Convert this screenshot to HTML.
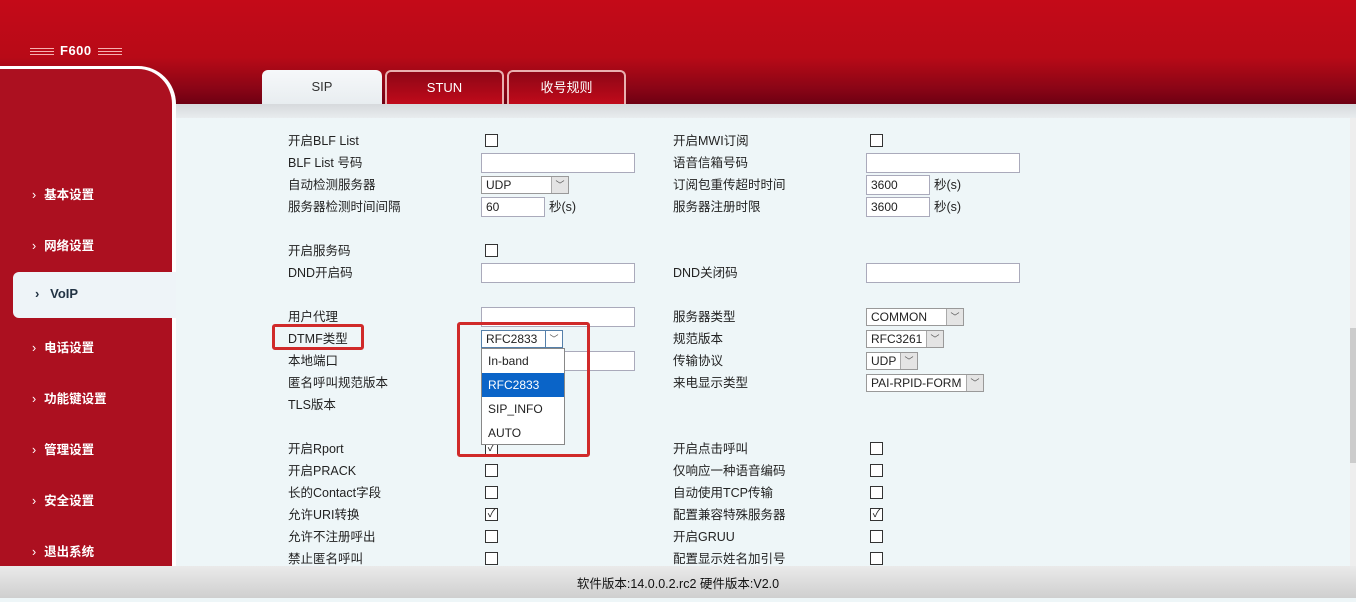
<!DOCTYPE html>
<html><head><meta charset="utf-8"><style>
*{margin:0;padding:0;box-sizing:border-box}
body{width:1356px;height:598px;overflow:hidden;position:relative;font-family:"Liberation Sans","Noto Sans CJK SC",sans-serif;font-size:12.5px;color:#222;background:#eef6f8}
#hdr{position:absolute;left:0;top:0;width:1356px;height:104px;background:linear-gradient(180deg,#c40a18 0%,#b80a17 55%,#8a0516 85%,#6e0012 100%)}
#logo{position:absolute;left:24px;top:43px;color:#fff;font-weight:bold;font-size:13px;letter-spacing:.5px}
#logo i{display:inline-block;width:24px;height:7px;border-top:1px solid #f5b0b0;border-bottom:1px solid #f5b0b0;vertical-align:middle;margin:0 6px;position:relative}
#logo i:after{content:"";position:absolute;left:0;right:0;top:2px;height:1px;background:#f5b0b0}
#side{position:absolute;left:0;top:66px;width:176px;height:500px;background:#ac1020;border-top:3px solid #fff;border-right:4px solid #fff;border-top-right-radius:38px}
.nav{position:absolute;left:32px;color:#fff;font-weight:bold;font-size:12.5px}
.nav:before{content:"›";margin-right:8px;font-weight:normal}
#act{position:absolute;left:13px;top:272px;width:163px;height:46px;background:#eef4f8;border-radius:6px 0 0 6px}
#act span{position:absolute;left:22px;top:14px;font-weight:bold;color:#234;font-size:13px}
.tab{position:absolute;top:70px;height:34px;border-radius:6px 6px 0 0;text-align:center;line-height:34px;font-size:13px}
#band{position:absolute;left:176px;top:104px;width:1180px;height:14px;background:linear-gradient(#d6d9dc,#e8ecee)}
#scroll{position:absolute;left:1350px;top:118px;width:6px;height:448px;background:#eee}
#foot{position:absolute;left:0;top:566px;width:1356px;height:32px;background:linear-gradient(#eaeaea,#cfcfcf);text-align:center;line-height:36px;font-size:12.5px;color:#111}
.l{position:absolute;white-space:nowrap;margin-top:-4px}
.in{position:absolute;height:20px;border:1px solid #aab;background:#fff;font-size:12px;padding-left:4px;line-height:18px}
.cb{position:absolute;width:13px;height:13px;border:1px solid #333;background:#fff;font-size:11px;line-height:11px;text-align:center}
.sel{position:absolute;height:18px;border:1px solid #999;background:#fff;font-size:12px;padding-left:4px;line-height:16px}
.sel b{position:absolute;right:0;top:0;width:17px;height:16px;border-left:1px solid #aaa;background:#e4e4e4;font-weight:normal;font-size:9px;text-align:center;color:#555}
</style></head><body>
<div id="hdr"></div>
<div id="logo"><i></i>F600<i></i></div>
<div class="tab" style="left:262px;width:120px;background:linear-gradient(#f6f8fa,#e8edf0);color:#333">SIP</div>
<div class="tab" style="left:385px;width:119px;background:linear-gradient(#8d0616,#c00a1a);border:2px solid #e9b0b0;border-bottom:none;color:#fff;line-height:32px">STUN</div>
<div class="tab" style="left:507px;width:119px;background:linear-gradient(#8d0616,#c00a1a);border:2px solid #e9b0b0;border-bottom:none;color:#fff;line-height:32px">收号规则</div>
<div id="band"></div>
<div id="side"></div>
<div class="nav" style="top:184px">基本设置</div>
<div class="nav" style="top:235px">网络设置</div>
<div id="act"><span>›&nbsp;&nbsp;&nbsp;VoIP</span></div>
<div class="nav" style="top:337px">电话设置</div>
<div class="nav" style="top:388px">功能键设置</div>
<div class="nav" style="top:439px">管理设置</div>
<div class="nav" style="top:490px">安全设置</div>
<div class="nav" style="top:541px">退出系统</div>
<div id="scroll"><div style="position:absolute;top:210px;width:6px;height:135px;background:#ccc"></div></div>

<div class="l" style="left:288px;top:134px">开启BLF List</div><div class="cb" style="left:485px;top:134px"></div>
<div class="l" style="left:673px;top:134px">开启MWI订阅</div><div class="cb" style="left:870px;top:134px"></div>
<div class="l" style="left:288px;top:156px">BLF List 号码</div><div class="in" style="left:481px;top:153px;width:154px"></div>
<div class="l" style="left:673px;top:156px">语音信箱号码</div><div class="in" style="left:866px;top:153px;width:154px"></div>
<div class="l" style="left:288px;top:178px">自动检测服务器</div><div class="sel" style="left:481px;top:176px;width:88px">UDP<b>﹀</b></div>
<div class="l" style="left:673px;top:178px">订阅包重传超时时间</div><div class="in" style="left:866px;top:175px;width:64px">3600</div><div class="l" style="left:934px;top:178px">秒(s)</div>
<div class="l" style="left:288px;top:200px">服务器检测时间间隔</div><div class="in" style="left:481px;top:197px;width:64px">60</div><div class="l" style="left:549px;top:200px">秒(s)</div>
<div class="l" style="left:673px;top:200px">服务器注册时限</div><div class="in" style="left:866px;top:197px;width:64px">3600</div><div class="l" style="left:934px;top:200px">秒(s)</div>

<div class="l" style="left:288px;top:244px">开启服务码</div><div class="cb" style="left:485px;top:244px"></div>
<div class="l" style="left:288px;top:266px">DND开启码</div><div class="in" style="left:481px;top:263px;width:154px"></div>
<div class="l" style="left:673px;top:266px">DND关闭码</div><div class="in" style="left:866px;top:263px;width:154px"></div>

<div class="l" style="left:288px;top:310px">用户代理</div><div class="in" style="left:481px;top:307px;width:154px"></div>
<div class="l" style="left:673px;top:310px">服务器类型</div><div class="sel" style="left:866px;top:308px;width:98px">COMMON<b>﹀</b></div>
<div class="l" style="left:288px;top:332px">DTMF类型</div><div class="sel" style="left:481px;top:330px;width:82px;border-color:#5580aa">RFC2833<b style="background:#fff;border-color:#5580aa">﹀</b></div>
<div class="l" style="left:673px;top:332px">规范版本</div><div class="sel" style="left:866px;top:330px;width:78px">RFC3261<b>﹀</b></div>
<div class="l" style="left:288px;top:354px">本地端口</div><div class="in" style="left:481px;top:351px;width:154px"></div>
<div class="l" style="left:673px;top:354px">传输协议</div><div class="sel" style="left:866px;top:352px;width:52px">UDP<b>﹀</b></div>
<div class="l" style="left:288px;top:376px">匿名呼叫规范版本</div>
<div class="l" style="left:673px;top:376px">来电显示类型</div><div class="sel" style="left:866px;top:374px;width:118px">PAI-RPID-FORM<b>﹀</b></div>
<div class="l" style="left:288px;top:398px">TLS版本</div>

<div class="l" style="left:288px;top:442px">开启Rport</div><div class="cb" style="left:485px;top:442px">✓</div>
<div class="l" style="left:673px;top:442px">开启点击呼叫</div><div class="cb" style="left:870px;top:442px"></div>
<div class="l" style="left:288px;top:464px">开启PRACK</div><div class="cb" style="left:485px;top:464px"></div>
<div class="l" style="left:673px;top:464px">仅响应一种语音编码</div><div class="cb" style="left:870px;top:464px"></div>
<div class="l" style="left:288px;top:486px">长的Contact字段</div><div class="cb" style="left:485px;top:486px"></div>
<div class="l" style="left:673px;top:486px">自动使用TCP传输</div><div class="cb" style="left:870px;top:486px"></div>
<div class="l" style="left:288px;top:508px">允许URI转换</div><div class="cb" style="left:485px;top:508px">✓</div>
<div class="l" style="left:673px;top:508px">配置兼容特殊服务器</div><div class="cb" style="left:870px;top:508px">✓</div>
<div class="l" style="left:288px;top:530px">允许不注册呼出</div><div class="cb" style="left:485px;top:530px"></div>
<div class="l" style="left:673px;top:530px">开启GRUU</div><div class="cb" style="left:870px;top:530px"></div>
<div class="l" style="left:288px;top:552px">禁止匿名呼叫</div><div class="cb" style="left:485px;top:552px"></div>
<div class="l" style="left:673px;top:552px">配置显示姓名加引号</div><div class="cb" style="left:870px;top:552px"></div>

<div style="position:absolute;left:481px;top:348px;width:84px;height:97px;background:#fff;border:1px solid #888;font-size:12px">
<div style="height:24px;line-height:24px;padding-left:6px">In-band</div>
<div style="height:24px;line-height:24px;padding-left:6px;background:#0a64c8;color:#fff">RFC2833</div>
<div style="height:24px;line-height:24px;padding-left:6px">SIP_INFO</div>
<div style="height:24px;line-height:24px;padding-left:6px">AUTO</div></div>
<div style="position:absolute;left:272px;top:324px;width:92px;height:26px;border:3px solid #d02a2a;border-radius:3px"></div>
<div style="position:absolute;left:457px;top:322px;width:133px;height:135px;border:3px solid #d02a2a;border-radius:3px"></div>

<div id="foot">软件版本:14.0.0.2.rc2 硬件版本:V2.0</div>
</body></html>
